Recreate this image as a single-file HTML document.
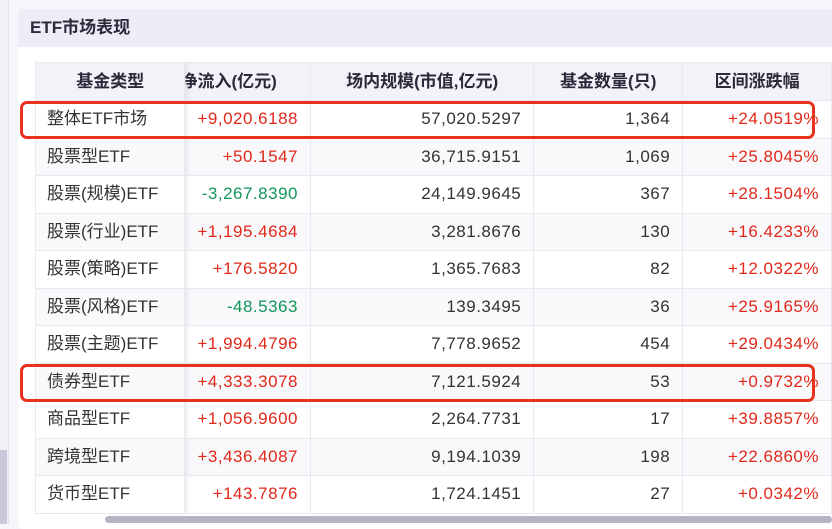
<!DOCTYPE html><html><head><meta charset="utf-8"><style>
body{margin:0;width:832px;height:524px;overflow:hidden;background:#f5f5fa;font-family:"Liberation Sans","Noto Sans CJK SC",sans-serif;position:relative}
.lb{position:absolute;left:0;top:0;width:8px;height:524px;background:#f0f0f7;border-right:1px solid #e4e4ee}
.card{position:absolute;left:18px;top:9px;width:820px;height:520px;background:#fff;border-radius:6px}
.hd{position:absolute;left:18px;top:9px;width:820px;height:38px;background:#ededf7;border-radius:6px 6px 0 0;font-weight:bold;font-size:17px;color:#2a2a3a;line-height:38px;padding-left:12px;box-sizing:border-box}
table{position:absolute;left:35px;top:62px;border-collapse:collapse;font-size:17px;color:#333;table-layout:fixed}
td,th{height:37.5px;padding:0 12px;border:1px solid #e8e8f0;box-sizing:border-box;white-space:nowrap;line-height:20px;vertical-align:middle;overflow:hidden}
th{background:#f2f2f8;font-weight:bold;color:#2a2a3a;height:38px}
td{text-align:right;letter-spacing:0.5px}td:first-child{text-align:left;padding-left:11px;letter-spacing:0}
tr:nth-child(odd) td{background:#f9f9fc}
.r{color:#e0291a}.g{color:#12955a}
.c2{box-shadow:inset 6px 0 6px -4px rgba(0,0,0,.08)}
.box{position:absolute;left:20px;width:795px;height:38px;border:3px solid #e8321e;border-radius:7px;box-sizing:border-box}
.sb{position:absolute;left:105px;top:516px;width:727px;height:7px;background:#b4b4c4;border-radius:4px}
.ll{position:absolute;left:0;top:450px;width:7px;height:74px;background:#c8c8d8}
</style></head><body>
<div class="lb"></div><div class="ll"></div>
<div class="card"></div>
<div class="hd">ETF市场表现</div>
<table>
<colgroup><col style="width:150px"><col style="width:125px"><col style="width:225px"><col style="width:150px"><col style="width:150px"></colgroup>
<tr><th>基金类型</th><th class="c2" style="text-align:left;padding-left:0;text-indent:-6px">净流入(亿元)</th><th>场内规模(市值,亿元)</th><th>基金数量(只)</th><th>区间涨跌幅</th></tr>
<tr><td>整体ETF市场</td><td class="r c2">+9,020.6188</td><td>57,020.5297</td><td>1,364</td><td class="r">+24.0519%</td></tr>
<tr><td>股票型ETF</td><td class="r c2">+50.1547</td><td>36,715.9151</td><td>1,069</td><td class="r">+25.8045%</td></tr>
<tr><td>股票(规模)ETF</td><td class="g c2">-3,267.8390</td><td>24,149.9645</td><td>367</td><td class="r">+28.1504%</td></tr>
<tr><td>股票(行业)ETF</td><td class="r c2">+1,195.4684</td><td>3,281.8676</td><td>130</td><td class="r">+16.4233%</td></tr>
<tr><td>股票(策略)ETF</td><td class="r c2">+176.5820</td><td>1,365.7683</td><td>82</td><td class="r">+12.0322%</td></tr>
<tr><td>股票(风格)ETF</td><td class="g c2">-48.5363</td><td>139.3495</td><td>36</td><td class="r">+25.9165%</td></tr>
<tr><td>股票(主题)ETF</td><td class="r c2">+1,994.4796</td><td>7,778.9652</td><td>454</td><td class="r">+29.0434%</td></tr>
<tr><td>债券型ETF</td><td class="r c2">+4,333.3078</td><td>7,121.5924</td><td>53</td><td class="r">+0.9732%</td></tr>
<tr><td>商品型ETF</td><td class="r c2">+1,056.9600</td><td>2,264.7731</td><td>17</td><td class="r">+39.8857%</td></tr>
<tr><td>跨境型ETF</td><td class="r c2">+3,436.4087</td><td>9,194.1039</td><td>198</td><td class="r">+22.6860%</td></tr>
<tr><td>货币型ETF</td><td class="r c2">+143.7876</td><td>1,724.1451</td><td>27</td><td class="r">+0.0342%</td></tr>
</table>
<div class="box" style="top:101px"></div>
<div class="box" style="top:364px"></div>
<div class="sb"></div>
</body></html>
